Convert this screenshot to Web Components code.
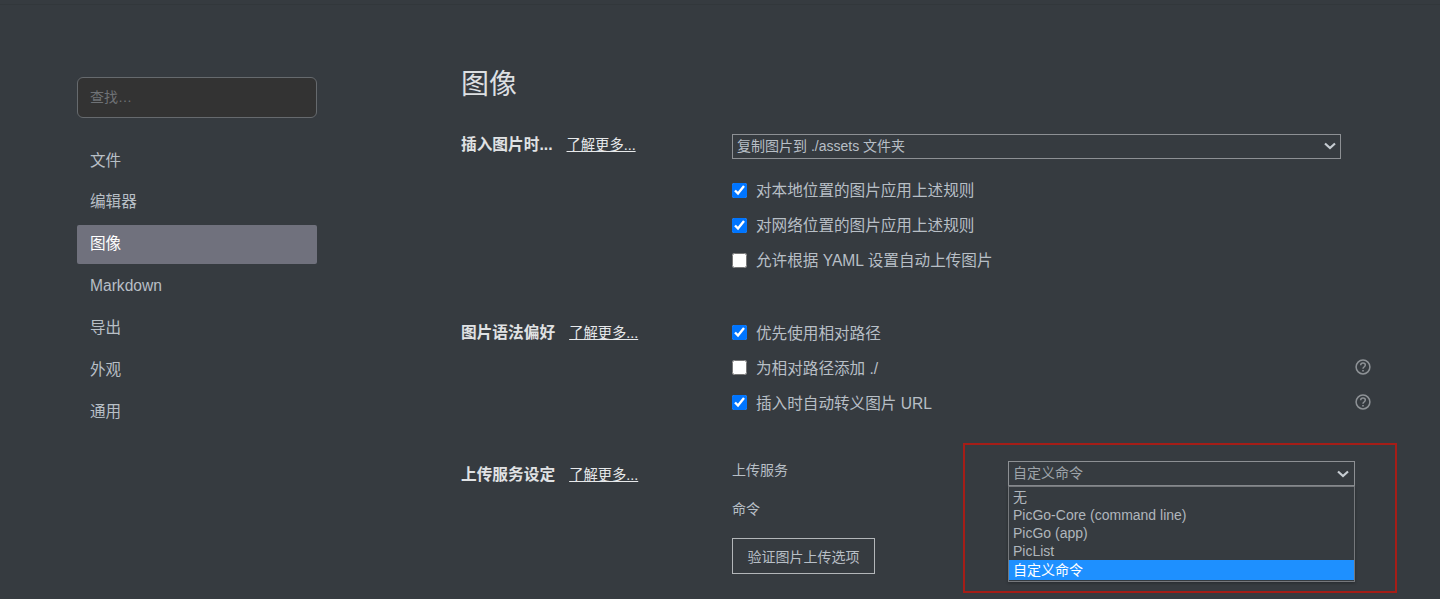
<!DOCTYPE html>
<html lang="zh-CN">
<head>
<meta charset="utf-8">
<title>图像</title>
<style>
  html, body { margin: 0; height: 599px; overflow: hidden; background: #363b40; }
  body { font-family: "Liberation Sans", "Noto Sans CJK SC", sans-serif; color: #b8bfc6; }
</style>
</head>
<body>
<prefs-page>
  <prefs-sidebar slot="side">
    <side-item>文件</side-item>
    <side-item>编辑器</side-item>
    <side-item active>图像</side-item>
    <side-item>Markdown</side-item>
    <side-item>导出</side-item>
    <side-item>外观</side-item>
    <side-item>通用</side-item>
  </prefs-sidebar>

  <prefs-title>图像</prefs-title>

  <prefs-section label="插入图片时..." style="--label-top: 1px">
    <plain-select value="复制图片到 ./assets 文件夹"></plain-select>
    <check-list style="margin-top: 13px">
      <check-row checked style="height: 34.5px">对本地位置的图片应用上述规则</check-row>
      <check-row checked>对网络位置的图片应用上述规则</check-row>
      <check-row>允许根据 YAML 设置自动上传图片</check-row>
    </check-list>
  </prefs-section>

  <prefs-section label="图片语法偏好" style="--label-top: 9px; margin-top: 37.5px">
    <check-list>
      <check-row checked>优先使用相对路径</check-row>
      <check-row help>为相对路径添加 ./</check-row>
      <check-row checked help>插入时自动转义图片 URL</check-row>
    </check-list>
  </prefs-section>

  <prefs-section label="上传服务设定" style="--label-top: 8px; margin-top: 38px">
    <upload-form></upload-form>
  </prefs-section>
</prefs-page>

<script>
const chevron = '<svg width="12" height="8" viewBox="0 0 12 8"><path d="M1 1.5 6 6l5-4.5" fill="none" stroke="#c6ccd2" stroke-width="2.2"/></svg>';

class PrefsPage extends HTMLElement {
  constructor() {
    super();
    this.attachShadow({ mode: 'open' }).innerHTML = `
      <style>
        :host { display: block; height: 599px; box-sizing: border-box; }
        .line { height: 1px; margin-top: 4px; background: #32373b; }
        .wrap { display: flex; }
        .side { width: 240px; margin-left: 77px; padding-top: 72px; flex: none; }
        .main { width: 910px; margin-left: 144px; padding-top: 60px; flex: none; }
      </style>
      <div class="line"></div>
      <div class="wrap">
        <div class="side"><slot name="side"></slot></div>
        <div class="main"><slot></slot></div>
      </div>`;
  }
}

class PrefsSidebar extends HTMLElement {
  constructor() {
    super();
    this.attachShadow({ mode: 'open' }).innerHTML = `
      <style>
        :host { display: block; }
        .search {
          height: 41px; box-sizing: border-box; padding: 0 12px 3px;
          display: flex; align-items: center;
          background: #333; border: 1px solid #666a6e; border-radius: 6px;
          color: #6f7276; font-size: 14px; margin-bottom: 23.5px;
        }
        .list { display: flex; flex-direction: column; gap: 3px; }
      </style>
      <div class="search">查找…</div>
      <div class="list"><slot></slot></div>`;
  }
}

class SideItem extends HTMLElement {
  constructor() {
    super();
    this.attachShadow({ mode: 'open' }).innerHTML = `
      <style>
        :host {
          display: block; height: 38.85px; line-height: 38.8px; padding-left: 13px;
          font-size: 15.6px; color: #b8bfc6; border-radius: 2px;
        }
        :host([active]) { background: #70717d; color: #fff; }
      </style>
      <slot></slot>`;
  }
}

class PrefsTitle extends HTMLElement {
  constructor() {
    super();
    this.attachShadow({ mode: 'open' }).innerHTML = `
      <style>
        :host { display: block; font-size: 28px; line-height: 40px; color: #dcdfe2; margin-bottom: 29px; }
      </style>
      <slot></slot>`;
  }
}

class PrefsSection extends HTMLElement {
  constructor() {
    super();
    this.attachShadow({ mode: 'open' }).innerHTML = `
      <style>
        :host { display: grid; grid-template-columns: 271px 639px; }
        .head { padding-top: var(--label-top, 0); display: flex; gap: 14px; line-height: 20px; align-items: baseline; }
        b { font-size: 15.7px; color: #e0e2e4; }
        a { font-size: 14.3px; color: #e6e8ea; text-decoration: underline; }
      </style>
      <div class="head"><b></b><a>了解更多...</a></div>
      <div class="body"><slot></slot></div>`;
    this.shadowRoot.querySelector('b').textContent = this.getAttribute('label');
  }
}

class PlainSelect extends HTMLElement {
  constructor() {
    super();
    this.attachShadow({ mode: 'open' }).innerHTML = `
      <style>
        :host {
          display: flex; width: 609px; height: 25px; box-sizing: border-box; align-items: center;
          justify-content: space-between; padding: 0 4px 3px;
          border: 1px solid #8d9094; font-size: 14px; color: #b8bfc6;
        }
        svg { display: block; margin-top: 2px; }
      </style>
      <span></span>${chevron}`;
    this.shadowRoot.querySelector('span').textContent = this.getAttribute('value');
  }
}

class CheckList extends HTMLElement {
  constructor() {
    super();
    this.attachShadow({ mode: 'open' }).innerHTML = `
      <style>:host { display: block; }</style><slot></slot>`;
  }
}

class CheckRow extends HTMLElement {
  constructor() {
    super();
    const help = this.hasAttribute('help') ? '<help-icon></help-icon>' : '';
    this.attachShadow({ mode: 'open' }).innerHTML = `
      <style>
        :host { display: flex; align-items: center; height: 35px; font-size: 15.6px; color: #b8bfc6; }
        input { width: 15px; height: 15px; margin: 2px 9px 0 0; accent-color: #0075ff; flex: none; }
        help-icon { margin-left: auto; }
      </style>
      <input type="checkbox"${this.hasAttribute('checked') ? ' checked' : ''}>
      <slot></slot>${help}`;
  }
}

class HelpIcon extends HTMLElement {
  constructor() {
    super();
    this.attachShadow({ mode: 'open' }).innerHTML = `
      <style>:host { display: block; width: 16px; height: 16px; } svg { display: block; }</style>
      <svg width="16" height="16" viewBox="0 0 16 16" fill="none" stroke="#8e9296" stroke-width="1.5">
        <circle cx="8" cy="8" r="6.9"/>
        <path d="M5.7 6.3c0-1.4 1-2.2 2.3-2.2s2.3.8 2.3 2c0 1.9-2.3 1.9-2.3 3.6"/>
        <path d="M8 10.9v1.5" stroke-width="1.6"/>
      </svg>`;
  }
}

class UploadForm extends HTMLElement {
  constructor() {
    super();
    this.attachShadow({ mode: 'open' }).innerHTML = `
      <style>
        :host { display: block; font-size: 14px; color: #b8bfc6; }
        .row { display: flex; }
        .row1 { height: 33px; align-items: flex-start; }
        .row1 span { width: 276px; flex: none; line-height: 26px; }
        .row2 { height: 36px; align-items: center; }
        button {
          display: block; margin-top: 12px; width: 143px; height: 36px; padding: 0;
          background: none; border: 1px solid #b3b6b9; border-radius: 0;
          font: inherit; color: #b8bfc6;
        }
      </style>
      <div class="row row1"><span>上传服务</span><service-select></service-select></div>
      <div class="row row2">命令</div>
      <button>验证图片上传选项</button>`;
  }
}

class ServiceSelect extends HTMLElement {
  constructor() {
    super();
    this.attachShadow({ mode: 'open' }).innerHTML = `
      <style>
        :host { display: block; position: relative; width: 347px; height: 25px; margin-top: 4px; font-size: 14px; }
        .box {
          height: 25px; box-sizing: border-box; display: flex; align-items: center;
          justify-content: space-between; padding: 0 5px 3px 4px;
          border: 1px solid #8d9094; color: #9ea4aa;
        }
        svg { display: block; margin-top: 3px; }
        .pop {
          position: absolute; left: 0; right: 0; top: 25px; box-sizing: border-box; padding: 1px 0 1px;
          height: 96px; background: #363b40; border: 1px solid #75787c; color: #b0b6bc;
          box-shadow: 0 1px 3px rgba(0,0,0,.3); line-height: 18px;
        }
        .pop div { height: 18px; padding-left: 4px; white-space: nowrap; }
        .pop div.on { height: 20px; line-height: 20px; background: #1e90ff; color: #fff; }
        .mark {
          position: absolute; left: -45px; top: -18px; width: 434px; height: 150px;
          box-sizing: border-box; border: 2px solid #a51d17; pointer-events: none;
        }
      </style>
      <div class="box"><span>自定义命令</span>${chevron}</div>
      <div class="pop">
        <div>无</div>
        <div>PicGo-Core (command line)</div>
        <div>PicGo (app)</div>
        <div>PicList</div>
        <div class="on">自定义命令</div>
      </div>
      <div class="mark"></div>`;
  }
}

customElements.define('prefs-page', PrefsPage);
customElements.define('prefs-sidebar', PrefsSidebar);
customElements.define('side-item', SideItem);
customElements.define('prefs-title', PrefsTitle);
customElements.define('prefs-section', PrefsSection);
customElements.define('plain-select', PlainSelect);
customElements.define('check-list', CheckList);
customElements.define('check-row', CheckRow);
customElements.define('help-icon', HelpIcon);
customElements.define('upload-form', UploadForm);
customElements.define('service-select', ServiceSelect);
</script>
</body>
</html>
